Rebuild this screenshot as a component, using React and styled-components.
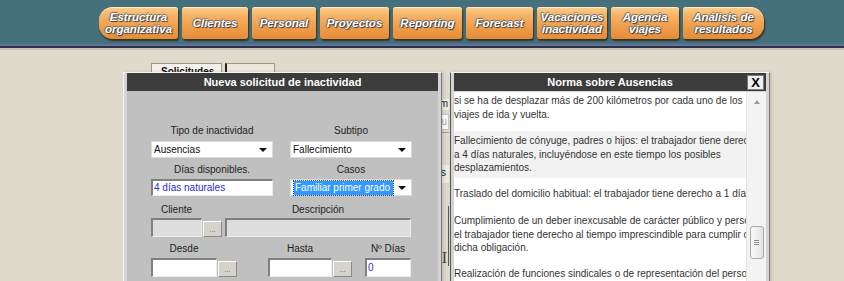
import React from 'react';
import styled, {createGlobalStyle} from 'styled-components';

const GlobalStyle = createGlobalStyle`
  html, body {
    margin: 0;
    padding: 0;
  }
  body {
    width: 844px;
    height: 281px;
    overflow: hidden;
    background: #dfdbcc;
    font-family: "Liberation Sans", Arial, sans-serif;
  }
`;

const Header = styled.header`
  height: 44px;
  box-sizing: border-box;
  background: #44717b;
  display: flex;
  align-items: flex-start;
  gap: 4px;
  padding: 7px 0 0 99px;
`;

const NavButton = styled.div`
  width: ${p => p.w}px;
  height: 32px;
  box-sizing: border-box;
  display: flex;
  align-items: center;
  justify-content: center;
  text-align: center;
  background: linear-gradient(#fbcf8c 0%, #f6b064 30%, #ef9c48 65%, #e48c3a 100%);
  border-radius: ${p => (p.first ? '14px 3px 3px 14px' : p.last ? '3px 14px 14px 3px' : '3px')};
  box-shadow: 1px 2px 2px rgba(50, 25, 0, 0.75), inset 0 1px 0 rgba(255, 240, 215, 0.7);
  color: #fff;
  font: italic bold 11.5px/12px "Liberation Sans", Arial, sans-serif;
  text-shadow: 1px 1px 1px #3a3a3a, -1px 0 1px #6a6a6a, 0 -1px 1px #6a6a6a;
`;

const HeaderRule = styled.div`
  height: 6px;
  background: linear-gradient(
    #66709a 0,
    #66709a 2px,
    #2b3347 2px,
    #2b3347 4px,
    #c8c4b6 4px,
    #c8c4b6 6px
  );
`;

const Workspace = styled.main`
  position: relative;
  height: 231px;
  overflow: hidden;
`;

const TabStrip = styled.div`
  display: flex;
  gap: 3px;
  margin: 13px 0 0 151px;
`;

const Tab = styled.div`
  width: ${p => p.w}px;
  height: 16px;
  box-sizing: border-box;
  background: ${p => (p.active ? '#f3f1ea' : '#e9e6da')};
  border: 1px solid #9c9888;
  border-left: ${p => (p.active ? '1px solid #9c9888' : '2px solid #222')};
  border-bottom: none;
  padding: 2px 0 0 9px;
  font-size: 10px;
  font-weight: bold;
  color: #111;
`;

const BackPanel = styled.div`
  width: 149px;
  margin: 20px 0 0 300px;
  display: flex;
  flex-direction: column;
`;

const BackRow = styled.div`
  height: ${p => p.h}px;
  margin-top: ${p => p.gap || 0}px;
  box-sizing: border-box;
  background: ${p => p.bg || 'transparent'};
  border: ${p => (p.boxed ? '1px solid #c6c6c6' : 'none')};
  border-bottom: ${p => (p.rule ? '1px solid #9a9a9a' : undefined)};
  text-align: right;
  padding-right: ${p => p.pr || 1}px;
  font-size: 10px;
  line-height: ${p => p.h - 2}px;
  color: ${p => p.color || '#222'};
  white-space: nowrap;
`;

const Splitter = styled.div`
  height: 60px;
  margin-top: 23px;
  border-right: 1px solid #555;
  width: 147px;
  display: flex;
  align-items: flex-end;
  justify-content: flex-end;
  font: 16px/16px "Liberation Serif", serif;
  color: #444;
  padding-right: 1px;
`;

const Dialog = styled.section`
  position: absolute;
  top: 22px;
  left: ${p => p.x}px;
  width: ${p => p.w}px;
  height: 230px;
  box-sizing: border-box;
  background: #d4d4d4;
  border-top: 1px solid #f4f4f4;
  border-left: 1px solid ${p => p.edge || '#f4f4f4'};
  border-right: 1px solid #777;
  padding: 0 3px 0 3px;
  display: flex;
  flex-direction: column;
  box-shadow: 2px 0 3px rgba(0, 0, 0, 0.12);
`;

const TitleBar = styled.div`
  height: 18px;
  flex: none;
  background: #3c3c3c;
  color: #fff;
  font-size: 11px;
  font-weight: bold;
  display: grid;
  grid-template-columns: 20px 1fr 20px;
  align-items: center;
  text-align: center;
`;

const CloseButton = styled.div`
  width: 17px;
  height: 15px;
  box-sizing: border-box;
  background: #efefef;
  border: 1px solid #7a7a7a;
  color: #000;
  font-size: 13px;
  font-weight: bold;
  line-height: 14px;
  text-align: center;
  justify-self: end;
  margin-right: 2px;
`;

const FormBody = styled.div`
  flex: 1;
  background: #c0c0c0;
  padding: 33px 0 0 24px;
`;

const FieldRow = styled.div`
  display: flex;
  align-items: flex-end;
  margin-top: ${p => p.gap || 0}px;
`;

const Field = styled.div`
  display: flex;
  flex-direction: column;
  margin-left: ${p => p.ml || 0}px;
`;

const Label = styled.div`
  height: 14px;
  line-height: 14px;
  margin-bottom: ${p => p.mb || 3}px;
  width: ${p => p.w}px;
  text-align: center;
  font-size: 10px;
  color: #1d1d1d;
`;

const Select = styled.div`
  width: ${p => p.w}px;
  height: 17px;
  box-sizing: border-box;
  background: #fff;
  border: 1px solid #dadada;
  display: flex;
  align-items: center;
  justify-content: space-between;
  padding: 0 5px 0 2px;
  font-size: 10px;
  color: #111;
`;

const Arrow = styled.span`
  width: 0;
  height: 0;
  border-left: 4px solid transparent;
  border-right: 4px solid transparent;
  border-top: 4px solid #111;
`;

const Highlight = styled.span`
  background: #3399ff;
  color: #fff;
  line-height: 14px;
  padding: 0 3px 0 1px;
  margin-left: 1px;
  outline: 1px dotted #1c4f8c;
`;

const Input = styled.div`
  width: ${p => p.w}px;
  height: ${p => p.h || 19}px;
  box-sizing: border-box;
  background: ${p => (p.disabled ? '#dddddd' : '#fff')};
  border-top: 2px solid #808080;
  border-left: 2px solid #808080;
  border-right: 1px solid #ececec;
  border-bottom: 1px solid #ececec;
  padding-left: 1px;
  font-size: 10px;
  line-height: ${p => (p.h || 19) - 4}px;
  color: #2a2ad6;
`;

const PickButton = styled.div`
  width: 19px;
  height: 16px;
  box-sizing: border-box;
  margin-left: 1px;
  background: #d6d3cb;
  border-top: 1px solid #fff;
  border-left: 1px solid #fff;
  border-right: 1px solid #8a8a8a;
  border-bottom: 1px solid #8a8a8a;
  color: #666;
  font-size: 8px;
  line-height: 16px;
  text-align: center;
`;

const ReadPane = styled.div`
  flex: 1;
  display: flex;
  background: #fff;
  margin-top: 1px;
  overflow: hidden;
`;

const TextView = styled.div`
  flex: 1;
  overflow: hidden;
  padding: 2px 0 0 0;
  font-size: 10px;
  line-height: 13.5px;
  color: #333;
`;

const Para = styled.div`
  margin-top: ${p => p.gap || 0}px;
  padding: ${p => (p.shade ? '3px 0 3px 0' : '0')};
  background: ${p => (p.shade ? '#f2f2f2' : 'transparent')};
  border-radius: 3px;
  white-space: nowrap;
`;

const ScrollBar = styled.div`
  width: 19px;
  flex: none;
  background: #f3f3f3;
  border-left: 1px solid #e2e2e2;
  display: flex;
  flex-direction: column;
  align-items: center;
`;

const ScrollArrow = styled.span`
  margin-top: 8px;
  width: 0;
  height: 0;
  border-left: 3px solid transparent;
  border-right: 3px solid transparent;
  border-bottom: 4px solid #999;
`;

const Thumb = styled.div`
  width: 14px;
  height: 33px;
  margin-top: 122px;
  box-sizing: border-box;
  border: 1px solid #a9a9a9;
  border-radius: 3px;
  background: linear-gradient(90deg, #fafafa, #e2e2e2);
  display: flex;
  align-items: center;
  justify-content: center;
`;

const Grip = styled.span`
  width: 5px;
  height: 5px;
  border-top: 1px solid #888;
  border-bottom: 1px solid #888;
  position: relative;
  box-sizing: border-box;
  background: linear-gradient(#fff 0, #fff 1px, #888 1px, #888 2px, #fff 2px);
`;

const navItems = [
  {label: ['Estructura', 'organizativa'], w: 79},
  {label: ['Clientes'], w: 66},
  {label: ['Personal'], w: 64},
  {label: ['Proyectos'], w: 69},
  {label: ['Reporting'], w: 69},
  {label: ['Forecast'], w: 67},
  {label: ['Vacaciones', 'inactividad'], w: 70},
  {label: ['Agencia', 'viajes'], w: 68},
  {label: ['Análisis de', 'resultados'], w: 81}
];

const paragraphs = [
  {
    lines: ['si se ha de desplazar más de 200 kilómetros por cada uno de los', 'viajes de ida y vuelta.']
  },
  {
    gap: 10,
    shade: true,
    lines: [
      'Fallecimiento de cónyuge, padres o hijos: el trabajador tiene derecho',
      'a 4 días naturales, incluyéndose en este tiempo los posibles',
      'desplazamientos.'
    ]
  },
  {gap: 9, lines: ['Traslado del domicilio habitual: el trabajador tiene derecho a 1 día natural.']},
  {
    gap: 14,
    lines: [
      'Cumplimiento de un deber inexcusable de carácter público y personal:',
      'el trabajador tiene derecho al tiempo imprescindible para cumplir con',
      'dicha obligación.'
    ]
  },
  {
    gap: 12,
    lines: [
      'Realización de funciones sindicales o de representación del personal',
      'en los términos establecidos legal o convencionalmente.'
    ]
  }
];

const App = () => (
  <>
    <GlobalStyle />
    <Header>
      {navItems.map((item, i) => (
        <NavButton key={i} w={item.w} first={i === 0} last={i === navItems.length - 1}>
          <span>
            {item.label.map((l, j) => (
              <div key={j}>{l}</div>
            ))}
          </span>
        </NavButton>
      ))}
    </Header>
    <HeaderRule />
    <Workspace>
      <TabStrip>
        <Tab w={71} active>Solicitudes</Tab>
        <Tab w={50} />
      </TabStrip>
      <BackPanel>
        <BackRow h={11} bg="#eeede7">Nombre y apellidos Nom</BackRow>
        <BackRow h={16} gap={4} boxed bg="#fff" color="#aaa" pr={0}>Azu</BackRow>
        <BackRow h={3} rule />
        <BackRow h={18} gap={32} bg="#ecebe4" pr={3}>Días</BackRow>
        <Splitter>I</Splitter>
      </BackPanel>

      <Dialog x={123} w={319}>
        <TitleBar>
          <span />
          <span>Nueva solicitud de inactividad</span>
          <span />
        </TitleBar>
        <FormBody>
          <FieldRow>
            <Field>
              <Label w={122}>Tipo de inactividad</Label>
              <Select w={122}>
                Ausencias
                <Arrow />
              </Select>
            </Field>
            <Field ml={17}>
              <Label w={122}>Subtipo</Label>
              <Select w={122}>
                Fallecimiento
                <Arrow />
              </Select>
            </Field>
          </FieldRow>
          <FieldRow gap={5}>
            <Field>
              <Label w={122} mb={2}>Días disponibles.</Label>
              <Input w={122} h={17}>4 días naturales</Input>
            </Field>
            <Field ml={17}>
              <Label w={122} mb={2}>Casos</Label>
              <Select w={122}>
                <Highlight>Familiar primer grado</Highlight>
                <Arrow />
              </Select>
            </Field>
          </FieldRow>
          <FieldRow gap={7}>
            <Field>
              <Label w={51} mb={1}>Cliente</Label>
              <Input w={51} disabled />
            </Field>
            <PickButton>...</PickButton>
            <Field ml={3}>
              <Label w={186} mb={1}>Descripción</Label>
              <Input w={186} disabled />
            </Field>
          </FieldRow>
          <FieldRow gap={5}>
            <Field>
              <Label w={66} mb={2}>Desde</Label>
              <Input w={66} />
            </Field>
            <PickButton>...</PickButton>
            <Field ml={31}>
              <Label w={64} mb={2}>Hasta</Label>
              <Input w={64} />
            </Field>
            <PickButton>...</PickButton>
            <Field ml={13}>
              <Label w={46} mb={2}>Nº Días</Label>
              <Input w={46}>0</Input>
            </Field>
          </FieldRow>
        </FormBody>
      </Dialog>

      <Dialog x={450} w={320} edge="#555">
        <TitleBar>
          <span />
          <span>Norma sobre Ausencias</span>
          <CloseButton>X</CloseButton>
        </TitleBar>
        <ReadPane>
          <TextView>
            {paragraphs.map((p, i) => (
              <Para key={i} gap={p.gap} shade={p.shade}>
                {p.lines.map((l, j) => (
                  <div key={j}>{l}</div>
                ))}
              </Para>
            ))}
          </TextView>
          <ScrollBar>
            <ScrollArrow />
            <Thumb>
              <Grip />
            </Thumb>
          </ScrollBar>
        </ReadPane>
      </Dialog>
    </Workspace>
  </>
);

export default App;
